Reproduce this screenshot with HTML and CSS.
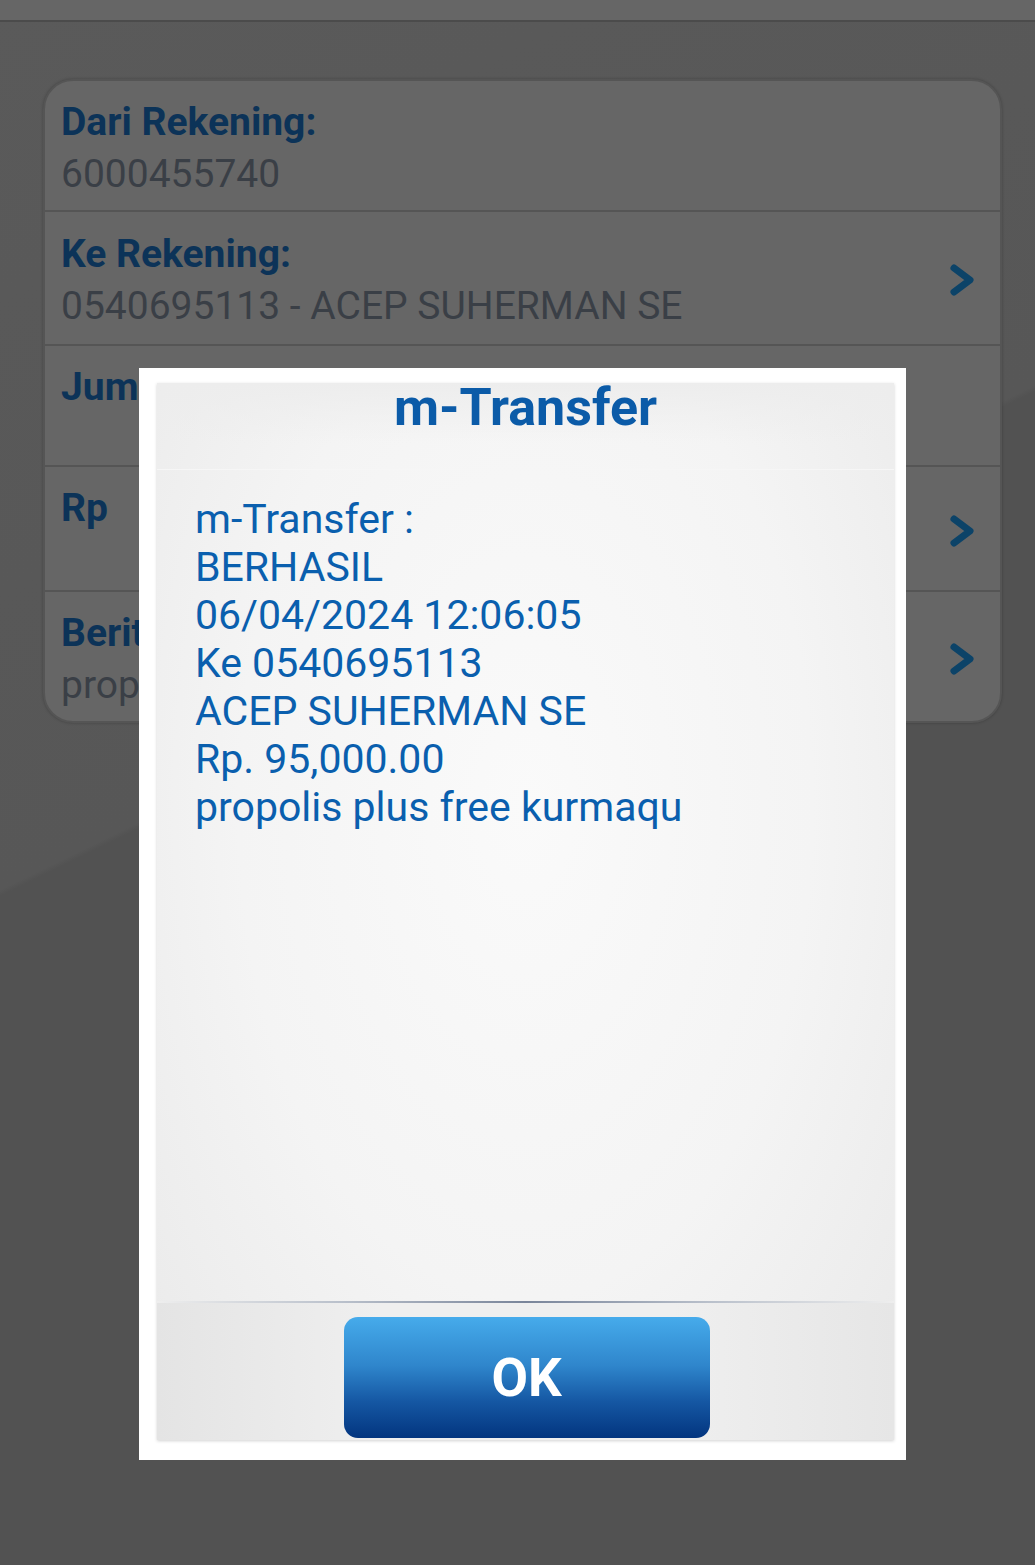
FILE: index.html
```html
<!DOCTYPE html>
<html>
<head>
<meta charset="utf-8">
<link rel="stylesheet" href="styles.css">
</head>
<body>
<div class="statusbar"></div>
<main class="content">
  <section class="card">
    <div class="row">
      <div class="row-text">
        <div class="label">Dari Rekening:</div>
        <div class="value">6000455740</div>
      </div>
    </div>
    <div class="row tall">
      <div class="row-text">
        <div class="label">Ke Rekening:</div>
        <div class="value">0540695113 - ACEP SUHERMAN SE</div>
      </div>
      <svg class="chev" viewBox="0 0 26 34"><path d="M5 5 L21 17 L5 29" fill="none" stroke="#0c4368" stroke-width="7" stroke-linecap="round" stroke-linejoin="round"/></svg>
    </div>
    <div class="row short">
      <div class="row-text">
        <div class="label">Jumlah:</div>
        <div class="value"></div>
      </div>
    </div>
    <div class="row short2">
      <div class="row-text">
        <div class="label">Rp</div>
        <div class="value"></div>
      </div>
      <svg class="chev" viewBox="0 0 26 34"><path d="M5 5 L21 17 L5 29" fill="none" stroke="#0c4368" stroke-width="7" stroke-linecap="round" stroke-linejoin="round"/></svg>
    </div>
    <div class="row last">
      <div class="row-text">
        <div class="label">Berita:</div>
        <div class="value">propolis plus free kurmaqu</div>
      </div>
      <svg class="chev" viewBox="0 0 26 34"><path d="M5 5 L21 17 L5 29" fill="none" stroke="#0c4368" stroke-width="7" stroke-linecap="round" stroke-linejoin="round"/></svg>
    </div>
  </section>
</main>

<div class="dialog">
  <div class="panel">
    <div class="title">m-Transfer</div>
    <div class="message">m-Transfer :<br>BERHASIL<br>06/04/2024 12:06:05<br>Ke 0540695113<br>ACEP SUHERMAN SE<br>Rp. 95,000.00<br>propolis plus free kurmaqu</div>
    <div class="divider"></div>
    <div class="footer">
      <button class="ok">OK</button>
    </div>
  </div>
</div>
</body>
</html>
```

FILE: styles.css
```css
html, body {
  margin: 0;
  padding: 0;
}
body {
  width: 1035px;
  height: 1565px;
  overflow: hidden;
  position: relative;
  font-family: Roboto, "Noto Sans", sans-serif;
  background: linear-gradient(154deg, #5a5a5a 0%, #575757 43%, #525252 43.3%, #525252 100%);
}
.statusbar {
  height: 20px;
  background: #666666;
  border-bottom: 2px solid #4b4b4b;
}
.content {
  padding: 57px 33px 0 43px;
}
.card {
  background: #666666;
  border: 2px solid #555555;
  border-radius: 30px;
  box-shadow: 0 0 3px rgba(0,0,0,0.25);
  overflow: hidden;
}
.row {
  display: flex;
  align-items: center;
  padding: 15px 25px 10px 16px;
  border-bottom: 2px solid #555555;
}
.row.tall {
  padding-top: 16px;
  padding-bottom: 12px;
}
.row.last {
  border-bottom: none;
}
.row-text {
  flex: 1;
  min-width: 0;
}
.label {
  font-size: 39px;
  font-weight: 700;
  line-height: 52px;
  color: #0c3358;
}
.value {
  font-size: 39px;
  line-height: 52px;
  height: 52px;
  color: #3a3f46;
  white-space: nowrap;
}
.row.short .value { height: 42px; }
.row.short2 .value { height: 46px; }
.chev {
  width: 26px;
  height: 34px;
  flex: none;
}

.dialog {
  position: absolute;
  left: 139px;
  top: 368px;
  width: 767px;
  height: 1092px;
  box-sizing: border-box;
  background: #ffffff;
  padding: 15px 12px 20px 18px;
  display: flex;
}
.panel {
  flex: 1;
  display: flex;
  flex-direction: column;
  background: radial-gradient(ellipse at 50% 40%, #fafafa 0%, #f4f4f4 55%, #e9e9e9 100%);
  box-shadow: 0 1px 3px rgba(0,0,0,0.18);
}
.title {
  height: 86px;
  border-bottom: 1px solid #f6f6f6;
  text-align: center;
  font-size: 52px;
  font-weight: 700;
  line-height: 50px;
  color: #0b5ba8;
  background: linear-gradient(#ededed, rgba(240,240,240,0) 70%);
}
.message {
  flex: 1;
  padding: 25px 38px 0;
  font-size: 41px;
  line-height: 48px;
  color: #0a5fae;
}
.divider {
  height: 2px;
  background: linear-gradient(90deg, #eeeeee 0%, #b9c0cb 25%, #79859a 50%, #b9c0cb 75%, #eeeeee 100%);
}
.footer {
  height: 137px;
  display: flex;
  justify-content: center;
  align-items: flex-start;
  padding-top: 14px;
  box-sizing: border-box;
  background: linear-gradient(90deg, #e4e4e4 0%, #efefef 30%, #efefef 70%, #e6e6e6 100%);
}
.ok {
  width: 366px;
  height: 121px;
  border: none;
  border-radius: 14px;
  background: linear-gradient(#46abeb 0%, #2f86cc 40%, #1557a3 70%, #03357f 100%);
  color: #ffffff;
  font-family: Roboto, "Noto Sans", sans-serif;
  font-size: 53px;
  font-weight: 700;
  padding: 0;
  margin-left: 2px;
}
```
